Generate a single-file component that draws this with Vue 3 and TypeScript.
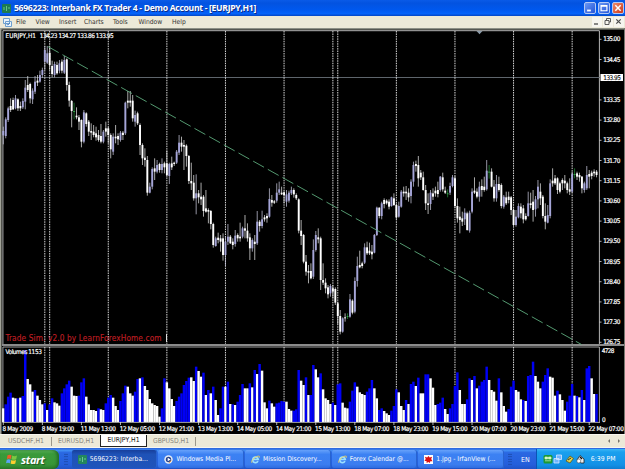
<template>
    <div class="desktop">
        <header class="titlebar">
            <svg class="app-icon" viewBox="0 0 9 9"><rect width="9" height="9" rx="1" fill="#1d7a50" /><path d="M2 6V3M4.5 7V2M7 5V3" stroke="#63c58b" /></svg>
            <span class="title">5696223: Interbank FX Trader 4 - Demo Account - [EURJPY,H1]</span>
            <div class="win-buttons">
                <i class="win"><svg viewBox="0 0 12 12"><path d="M2.5 9h4.5" stroke="#fff" stroke-width="2.2" /></svg></i>
                <i class="win"><svg viewBox="0 0 12 12"><path d="M2.5 3h7v6.3h-7zM2.5 3.8h7" fill="none" stroke="#fff" stroke-width="1.4" /></svg></i>
                <i class="win close"><svg viewBox="0 0 12 12"><path d="M2.8 2.8l6.4 6.4M9.2 2.8L2.8 9.2" stroke="#fff" stroke-width="1.8" /></svg></i>
            </div>
        </header>
        <nav class="menubar">
            <svg class="menu-icon" viewBox="0 0 9 9"><path d="M.5.5h6v5h-6zM2.5 3.5h6v5h-6z" fill="#e8f3fc" stroke="#6ea0cf" /><path d="M3.5 6l1.5 1 2-2" fill="none" stroke="#3d78b8" stroke-width=".8" /></svg>
            <span v-for="m in menus" :key="m.label" :class="['menu', m.key]">{{ m.label }}</span>
            <div class="mdi">
                <i><svg viewBox="0 0 9 9"><path d="M2 7h4" stroke="#4b4b4b" stroke-width="1.3" /></svg></i>
                <i><svg viewBox="0 0 9 9"><path d="M3.5 3V1.5h4V5H6M2 3.5h4v4H2z" fill="none" stroke="#4b4b4b" stroke-width=".9" /></svg></i>
                <i><svg viewBox="0 0 9 9"><path d="M2.3 2.3l4.4 4.4M6.7 2.3L2.3 6.7" stroke="#4b4b4b" stroke-width="1.2" /></svg></i>
            </div>
        </nav>

        <svg class="chart" viewBox="0 28 625 406" width="625" height="406">
            <rect x="0" y="28" width="625" height="406" fill="#000" />
            <rect x="0" y="28" width="625" height="1.6" fill="#8d9086" />
            <rect x="0" y="28" width="1.5" height="406" fill="#a2a398" />
            <rect x="624" y="28" width="1" height="406" fill="#77776f" />
            <!-- panes -->
            <path d="M2.9 344V30.7H599.4V344" fill="none" stroke="#c8c8c8" stroke-width=".9" />
            <rect x="2" y="344" width="622" height="2" fill="#8b8b8b" />
            <path d="M2.9 422.5V347H599.4V422.5" fill="none" stroke="#c8c8c8" stroke-width=".8" />
            <path d="M476.5 31h6l-3 3.2z" fill="#8c9ba8" />

            <line x1="3" x2="600" y1="77.5" y2="77.5" stroke="#697178" stroke-width=".9" />
            <g class="separators">
                <line v-for="i in sessions" :key="i" :x1="barX(i)" :x2="barX(i)" y1="31" y2="344" />
                <line v-for="i in sessions" :key="'v' + i" :x1="barX(i)" :x2="barX(i)" y1="347" y2="422" />
            </g>

            <g v-for="(c, i) in candles" :key="'c' + i">
                <line :x1="barX(i)" :x2="barX(i)" :y1="c.high" :y2="c.low" :stroke="wickColor(c.kind)" stroke-width=".75" />
                <rect v-if="c.kind !== 'g'" :x="barX(i) - 0.95" :y="c.top" width="1.9" :height="c.bottom - c.top" :fill="bodyColor(c.kind)" />
                <rect v-else :x="barX(i) - 1" :y="c.top" width="2" height=".9" fill="#36a84c" />
            </g>
            <line x1="47.8" y1="46.5" x2="581.5" y2="344.5" stroke="#62b383" stroke-width=".85" stroke-dasharray="12.4 4.4" />

            <rect v-for="(v, i) in volumes" :key="'b' + i" :x="barX(i) - 1.25" :y="v.y" width="2.45" :height="422 - v.y" :fill="v.up ? '#0000f5' : '#fff'" />
            <line x1="2.5" x2="600" y1="422.4" y2="422.4" stroke="#b5b5b5" stroke-width=".9" />

            <g class="axis">
                <text x="5.5" y="37.8" textLength="30.5">EURJPY,H1</text>
                <text x="39.7" y="37.8" textLength="74">134.23 134.27 133.86 133.95</text>
                <text x="5.5" y="354.3" textLength="36.3">Volumes 1153</text>
                <template v-for="p in priceLabels" :key="p.text">
                    <line x1="599.5" x2="601.5" :y1="p.y" :y2="p.y" stroke="#ddd" stroke-width=".8" />
                    <text x="603.3" :y="p.y + 2.1" textLength="17">{{ p.text }}</text>
                </template>
                <rect x="600.5" y="74" width="22.5" height="7" fill="#fff" />
                <text class="current" x="603.3" y="79.9" textLength="17.5">133.95</text>
                <text x="601.8" y="353" textLength="12.5">4728</text>
                <text x="602" y="421.7">0</text>
                <template v-for="(t, i) in timeLabels" :key="t">
                    <line :x1="3.3 + i * 39.06" :x2="3.3 + i * 39.06" y1="422" y2="425" stroke="#ddd" stroke-width=".8" />
                    <text :x="2.6 + i * 39.06" y="431.2" :textLength="labelWidth(t)">{{ t }}</text>
                </template>
            </g>
            <text class="sim" x="5.5" y="341" textLength="156">Trade Sim. v2.0 by LearnForexHome.com</text>
            <rect x="166" y="334" width="1" height="8" fill="#ddd" />
        </svg>

        <div class="tabs">
            <span v-for="(t, i) in tabs" :key="t" :class="['tab', 't' + i, { active: i === 2 }]">{{ t }}</span>
            <svg class="scroll" viewBox="0 0 14 6"><path d="M3 1v4L1 3zM11 1v4l2-2z" fill="#77746b" /></svg>
        </div>

        <footer class="taskbar">
            <div class="start">
                <svg viewBox="0 0 12 11"><path d="M1.5 1.3Q3.5.2 5.5 1.3L4.8 5Q3 4 .9 5z" fill="#f05a2b" /><path d="M6.2 1.6Q8.5 2.8 11 1.6L10.2 5.3Q8 6.3 5.5 5.3z" fill="#7cc842" /><path d="M.8 5.8Q2.8 4.7 4.6 5.8L4 9.3Q2 8.3 0 9.3z" fill="#5ba4f6" /><path d="M5.3 6Q7.5 7.2 10 6L9.3 9.6Q7 10.6 4.6 9.6z" fill="#fbcf30" /></svg>
                <span>start</span>
            </div>
            <i class="grip"></i>
            <div class="task pressed">
                <svg viewBox="0 0 9 9"><rect width="9" height="9" rx="1" fill="#23865c" /><path d="M2 6V3M4.5 7V2M7 5V3" stroke="#6ac992" /></svg>
                <span>5696223: Interba...</span>
            </div>
            <div class="task">
                <svg viewBox="0 0 9 9"><circle cx="4.5" cy="4.5" r="4.2" fill="#e9eef6" /><circle cx="4.5" cy="4.5" r="2.7" fill="#27428c" /><path d="M3.7 2.8v3.4l3-1.7z" fill="#fff" /><path d="M7 5.5a2.6 2.6 0 0 1-2 2" fill="none" stroke="#e8923a" /></svg>
                <span>Windows Media Pl...</span>
            </div>
            <div v-for="t in ['Mission Discovery...', 'Forex Calendar @...']" :key="t" class="task">
                <svg viewBox="0 0 9 9"><path d="M7 6.2A2.8 2.8 0 1 1 7.3 4.5H2.2" fill="none" stroke="#9be0ff" stroke-width="1.7" /><path d="M.9 7.8C-.8 5.5 6 .2 8.2 1.2c.6.4.3 1-.2 1.7" fill="none" stroke="#f2d25c" stroke-width=".9" /></svg>
                <span>{{ t }}</span>
            </div>
            <div class="task">
                <svg viewBox="0 0 10 10"><rect width="10" height="10" fill="#fff" /><path d="M1 2l2.5.8L5 1l1.3 1.8L9 2 8 4.5 9.5 7 7 7l-.5 2L5 7.7 2.8 9 3 7 .5 6.5 2 4.5z" fill="#dc1111" /></svg>
                <span>1.jpg - IrfanView (...</span>
            </div>
            <i class="grip right"></i>
            <span class="lang">EN</span>
            <div class="tray">
                <svg viewBox="0 0 42 11"><rect x=".5" y="1" width="9" height="8.5" rx="1.5" fill="#1d9a32" /><path d="M2 3h2.5v2H2zM5.5 3H8v2H5.5zM2 6.8h6" fill="#d6f5c6" stroke="#d6f5c6" stroke-width=".7" /><path d="M13.5 1h5v4.5h-5zM11 4.5h5V9h-5z" fill="#6fb5ff" stroke="#d7e9ff" stroke-width=".8" /><path d="M23 7l4-5 3.5 2.5L27 9z" fill="#e3d34b" stroke="#5e581b" stroke-width=".8" /><path d="M25 6l3-2" stroke="#333" /><path d="M34 6l3-4.5L41 5v4h-3z" fill="#eee" stroke="#222" stroke-width=".8" /><circle cx="35.8" cy="7" r="2" fill="#fff" stroke="#555" stroke-width=".6" /><path d="M37 3l2 2" stroke="#111" stroke-width="1.3" /></svg>
                <span>6:39 PM</span>
            </div>
        </footer>
    </div>
</template>

<script setup lang="ts">
type Kind = 'u' | 'w' | 'g'

interface Candle {
    high: number
    top: number
    bottom: number
    low: number
    kind: Kind
}

const menus = ['File', 'View', 'Insert', 'Charts', 'Tools', 'Window', 'Help'].map((label) => ({ label, key: label.toLowerCase() }))
const tabs = ['USDCHF,H1', 'EURUSD,H1', 'EURJPY,H1', 'GBPUSD,H1']
const timeLabels = [
    '8 May 2009', '8 May 19:00', '11 May 13:00', '12 May 05:00', '12 May 21:00', '13 May 13:00', '14 May 05:00', '14 May 21:00',
    '15 May 13:00', '18 May 07:00', '18 May 23:00', '19 May 15:00', '20 May 07:00', '20 May 23:00', '21 May 15:00', '22 May 07:00',
]
// bar indexes where a new trading day begins
const sessions = [17, 19, 43, 67, 91, 115, 135, 137, 161, 185, 209, 233]

const barX = (i: number) => 3.3 + i * 2.4414
const labelWidth = (t: string) => (t.length === 10 ? 30.5 : t.length === 11 ? 32.5 : 35.3)
const bodyColor = (k: Kind) => (k === 'u' ? '#a5a5d8' : '#fff')
const wickColor = (k: Kind) => (k === 'g' ? '#238c35' : k === 'u' ? '#c4c4d8' : '#e2e2e2')

const priceLabels = Array.from({ length: 16 }, (_, i) => ({ text: (135 - i * 0.55).toFixed(2), y: 39.3 + i * 20.2 })).filter((p) => p.text !== '133.90')

// high, body top, body bottom, low and kind per bar; values are thirds of a pixel below the block's first number
const blocks: [number, string][] = [
    [30, `290 303 316 343 u,262 268 318 325 u,230 235 270 276 u,205 228 240 246 w,203 210 238 240 w,195 205 235 238 u,205 208 235 243 w,
    215 228 235 243 w,205 213 232 237 u,150 173 215 238 u,138 165 180 186 w,158 162 205 220 w,175 182 208 222 u,138 155 185 192 u,
    135 152 158 168 w,122 135 155 158 u,113 120 135 144 u,48 60 95 120 u,48 70 98 102 u,52 68 105 120 w,92 108 132 142 w,95 102 135 142 u,
    95 105 130 134 w,90 100 122 130 u,88 95 122 130 w,78 90 128 132 u,85 88 165 182 w,155 165 212 230 w,210 213 243 292 w,218 243 243 268 g,
    232 257 262 268 w,255 262 275 300 w,268 270 335 352 w,240 247 335 340 u,247 250 282 290 w,270 275 305 318 w,280 303 308 330 w,
    285 305 315 322 w,290 310 322 332 w,300 315 330 335 w,282 318 335 340 w,300 305 335 340 u,275 295 305 320 w,290 295 315 340 w,
    310 315 358 385 w,310 320 365 375 u,285 320 325 340 w,310 318 328 345 w,303 308 330 335 u,303 308 315 330 w,215 218 310 315 u,
    183 212 218 235 w,183 212 218 230 w,195 212 265 275 w,242 255 275 290 u,245 250 280 285 w,280 285 345 375 w,340 345 385 405 w,355 383 390 410 w`],
    [80, `228 240 338 347 w,308 320 338 340 u,262 267 320 328 u,235 265 275 300 w,240 255 275 280 u,248 252 270 278 w,235 252 270 280 u,
    245 250 262 280 w,212 250 285 290 w,248 252 288 312 u,230 250 262 270 w,245 248 252 258 w,210 215 248 252 u,165 188 218 225 u,
    170 188 200 215 w,180 195 200 270 w,193 197 228 260 w,225 228 303 312 w,248 303 310 330 w,285 308 355 362 w,283 340 355 403 u,
    330 340 352 370 w,308 350 358 375 w,345 350 393 410 w,330 385 395 398 w,385 390 395 430 w,390 393 432 448 w,428 432 495 503 w,
    470 475 498 500 u,458 473 480 490 w,465 475 485 515 w,460 475 525 542 w,468 485 525 558 u,432 470 485 495 u,465 470 490 492 w,
    475 485 495 508 w,450 467 492 500 u,460 465 475 485 w,428 470 475 485 w,440 445 470 475 u,405 445 452 475 w,430 452 475 485 w,
    460 472 505 540 w,475 480 505 515 u,465 485 492 540 w,393 425 490 495 u,420 425 438 455 w,392 418 438 445 u,405 412 418 425 w,400 408 415 428 w`],
    [160, `85 117 170 173 u,105 120 128 140 w,120 124 128 132 w,70 98 122 128 u,65 88 98 105 u,80 98 103 105 w,92 97 105 130 w,
    90 103 125 140 u,92 98 122 128 u,80 90 100 105 u,85 90 103 113 w,100 105 115 120 w,115 118 212 220 w,180 212 228 255 w,
    222 225 305 310 w,285 305 335 347 w,315 333 338 370 w,310 333 355 358 w,238 270 350 357 u,213 225 270 275 u,205 232 238 250 w,
    230 235 360 390 w,310 360 368 375 w,355 368 385 400 w,375 382 403 415 w,372 378 400 410 u,375 385 395 415 w,382 387 428 435 w,
    425 430 468 493 w,450 468 515 523 w,472 475 515 518 u,460 472 475 485 w,460 468 468 477 g,402 418 470 473 u,418 422 458 463 w,
    352 363 455 460 u,290 318 363 380 u,272 315 322 325 w,305 310 318 325 w,250 262 308 312 u,245 262 280 285 w,248 272 280 285 w,
    255 275 283 298 w,222 225 278 280 u`],
    [140, `200 203 285 288 u,202 203 228 235 w,185 190 228 238 u,175 180 192 205 w,178 182 190 194 w,178 185 200 208 w,170 172 198 200 u,
    160 175 195 198 w,190 195 232 238 w,185 198 230 233 u,150 155 200 203 u,140 155 160 170 w,138 155 160 180 w,145 158 172 185 w,
    118 125 168 190 u,65 75 125 140 u,62 72 78 95 w,48 75 115 140 w,90 98 112 120 w,95 112 150 152 w,135 150 190 210 w,
    160 190 195 222 w,150 158 192 210 u,145 160 170 180 w,140 152 160 170 w,125 150 162 172 w,108 110 150 155 u,98 112 148 155 w,
    140 152 158 162 w,148 160 160 172 g,128 138 158 165 u,105 112 138 142 u,108 115 198 205 w,175 198 235 248 w,200 230 240 280 w,
    215 235 245 258 w,205 218 238 255 u,215 220 270 272 w,212 218 272 278 u,145 155 215 220 u,112 152 158 162 w,145 155 170 175 w,
    125 140 170 185 u,118 138 150 170 w,110 140 150 155 w,60 92 148 152 u,75 95 95 116 g,85 95 140 142 w,120 140 175 185 w,
    105 132 175 185 u,110 132 150 155 w,130 135 198 205 w,165 170 200 206 u,155 172 190 195 w,155 170 180 190 w,168 172 210 225 w,
    205 210 255 258 w,210 230 255 260 u,190 198 232 235 u,190 200 220 235 w,195 205 238 250 w,220 228 238 242 w,155 190 228 230 u,
    158 190 195 205 w,150 185 210 245 w,168 178 208 230 u,120 140 178 205 u,130 155 175 195 w,165 170 228 235 w,190 228 245 268 w,
    195 225 248 250 u,118 130 228 235 u,85 122 130 140 w,105 115 130 135 w,112 115 150 162 w,125 130 155 160 w,115 120 130 150 w,
    105 122 130 145 w,125 130 150 160 w,115 148 155 165 w,95 102 155 158 u,85 102 102 115 g,95 100 110 120 w,98 105 112 125 w,
    108 110 145 160 w,125 130 150 158 u,78 105 145 150 u,90 102 110 145 w,92 98 108 118 w,88 95 100 110 w,90 95 105 112 w`],
]

const candles: Candle[] = blocks.flatMap(([base, rows]) =>
    rows.split(',').map((row) => {
        const [h, t, b, l, kind] = row.trim().split(' ')
        const y = (s: string) => base + Number(s) / 3
        return { high: y(h), top: y(t), bottom: y(b), low: y(l), kind: kind as Kind }
    })
)

// same units as above, b = rising volume (blue), w = falling volume (white)
const volumeBlocks: [number, string][] = [
    [325, `w250 b238 b215 b203 w218 w220 b220 w218 b213 b75 w162 w178 w200 b195 w212 w225 w238 b235 w255 b238 b220 w232 w235 w242
    b205 b190 b178 b167 w185 w212 w213 b212 b172 b160 w215 w238 w255 w255 w258 b250 w253 w255 b235 b218 b210 w218 w243 w255
    b228 b205 b182 w185 w205 w212 b200 b162 w160 b157 w183 w195 w222 w235 w240 w243 w275 b250 b160 w172 w190 w222 w243
    b228 b215 b205 b180 b168 b158 w157 w168 b125 w138 w155`],
    [340, `b98 w165 b150 w160 b140 w180 w225 b205 b140 w140 b125 w192 b193 w195 b185 b165 b132 w145 w145 b130 w142 b90 w102 b72
    w92 w187 w205 b182 w190 w200 b190 b188 b183 b185 w185 w207 w212 b212 b208 b90 w122 w135 b112 w165 b165 b75 w88 w112
    b100 w148 w175 w180 w192 b188 w195 b133 b130 w188 w203 w205 b185 b152 b127 w140 w157 w162 w165 b155 b145 b120 w145 w175
    b210 b205 w213 w220 w225 b212 b198 b148 w157 w198 w210 b180 w192 b132 b125 w138 b113 w160 w160 b103 b103 w115 w143 w195
    b192 b188 b173 w207 w222 b205 b192 b138 b97 w150 w192 w192 b178 b115 w120 b108 w145 b137 b125 b120 b80 w120 w150 w155
    w182 b115 w157 w198 w215 b207 b140 b122 w150 w155 w178 b180 w183 b108 b105 b65 w108 w125 w145 b125 b105 b85 w110 w113
    w167 b152 w163 w180 w212 b185 b167 b132 w167 b168 w172 b150 w180 b85 b78 w115 w162 b162`],
]

const volumes = volumeBlocks.flatMap(([base, row]) =>
    row.trim().split(/\s+/).map((s) => ({ up: s[0] === 'b', y: base + Number(s.slice(1)) / 3 }))
)
</script>

<style scoped>
.desktop {
    width: 625px;
    height: 469px;
    display: flex;
    flex-direction: column;
    overflow: hidden;
    background: #000;
    font-family: "DejaVu Sans Condensed", "DejaVu Sans", sans-serif;
    font-stretch: condensed;
    font-size: 7px;
    white-space: nowrap;
}

.titlebar {
    height: 16px;
    flex: none;
    display: flex;
    align-items: center;
    padding: 0 1px 0 2px;
    background: linear-gradient(#0a5be8, #0353e0 20%, #0058ee 60%, #0463fa 85%, #0446c4);
}

.app-icon {
    width: 9px;
    height: 9px;
}

.title {
    margin-left: 3px;
    color: #fff;
    font: bold 8.6px "Open Sans", sans-serif;
    letter-spacing: -0.3px;
    text-shadow: 1px 1px 0 #0b2c86;
}

.win-buttons {
    margin-left: auto;
    display: flex;
    gap: 2px;
}

.win {
    width: 12px;
    height: 12px;
    box-sizing: border-box;
    border: 1px solid #b4c8f4;
    border-radius: 2px;
    background: linear-gradient(135deg, #6a98f4, #2354d8);
    display: flex;
}

.win svg {
    width: 10px;
    height: 10px;
}

.win.close {
    background: linear-gradient(135deg, #ee8c6c, #cc3718);
}

.menubar {
    height: 12px;
    flex: none;
    display: flex;
    align-items: center;
    background: #ece9d8;
    color: #333;
    font-size: 6.7px;
}

.menu-icon {
    width: 9px;
    height: 9px;
    margin: 0 4px 0 3px;
}

.menu.file {
    width: 19.5px;
}

.menu.view {
    width: 23.5px;
}

.menu.insert {
    width: 25px;
}

.menu.charts {
    width: 29px;
}

.menu.tools {
    width: 25.5px;
}

.menu.window {
    width: 33.5px;
}

.mdi {
    margin-left: auto;
    display: flex;
    gap: 1px;
    padding-right: 1px;
}

.mdi i {
    width: 10px;
    height: 10px;
    background: #f6f5ef;
}

.mdi svg {
    display: block;
    width: 9px;
    height: 9px;
}

.chart {
    flex: none;
    display: block;
}

.separators line {
    stroke: #f0f0f0;
    stroke-width: 0.9;
    stroke-dasharray: 1.5 0.94;
}

.axis text {
    fill: #fff;
    stroke: #fff;
    stroke-width: 0.18px;
    font-size: 6.4px;
}

.axis text.current {
    fill: #000;
    stroke: #000;
    stroke-width: 0.1px;
}

.sim {
    fill: #c01f24;
    stroke: #c01f24;
    stroke-width: 0.12px;
    font-size: 8.2px;
}

.tabs {
    height: 14px;
    flex: none;
    display: flex;
    align-items: center;
    box-sizing: border-box;
    padding-left: 1px;
    border-top: 1px solid #f7f6ef;
    border-bottom: 1px solid #f7f6ef;
    background: #ece9d8;
    color: #88867d;
    font-size: 6.8px;
}

.tab {
    box-sizing: border-box;
    height: 9px;
    line-height: 9px;
    text-align: center;
    border-right: 1px solid #9b988b;
}

.tab.t0 {
    width: 51px;
}

.tab.t1 {
    width: 48px;
    border-right: 0;
}

.tab.active {
    width: 47px;
    height: 12px;
    line-height: 10px;
    background: #fff;
    color: #111;
    border: 1px solid #222;
    border-top: 0;
}

.tab.t3 {
    width: 49px;
}

.scroll {
    margin: 0 4px 0 auto;
    width: 14px;
    height: 6px;
}

.taskbar {
    flex: 1;
    display: flex;
    align-items: stretch;
    box-sizing: border-box;
    padding-top: 2px;
    background: linear-gradient(#2a62dc, #3f8cf2 12%, #2a68e2 22%, #245edb 80%, #2053c6);
    color: #fff;
}

.start {
    width: 59px;
    box-sizing: border-box;
    padding-left: 6px;
    display: flex;
    align-items: center;
    gap: 3px;
    border-radius: 0 6px 6px 0;
    background: linear-gradient(#5fb45c, #3a9a3a 20%, #379637 75%, #2b7d2b);
    box-shadow: inset -2px 0 3px #236b28;
}

.start svg {
    width: 12px;
    height: 11px;
}

.start span {
    font: italic bold 11px "Open Sans", sans-serif;
    letter-spacing: -0.4px;
    text-shadow: 1px 1px 1px #1d5520;
    margin-top: -1px;
}

.grip {
    width: 4px;
    margin: 3px 3px 3px 5px;
    background: radial-gradient(circle, #1b48a8 0.7px, transparent 0.9px) 0 0 / 2px 2.5px;
}

.task {
    width: 86px;
    margin: 0 0 1px 1px;
    box-sizing: border-box;
    padding-left: 6px;
    display: flex;
    align-items: center;
    gap: 3px;
    border-radius: 2px;
    background: linear-gradient(#66a1fa, #3c81f3 25%, #3b7df0 80%, #2f6ce0);
    box-shadow: inset -1px 0 0 #2863cf;
    font-size: 6.7px;
}

.task.pressed {
    background: linear-gradient(#173f9c, #1e52b7 25%, #2054bb);
}

.task svg {
    width: 9px;
    height: 9px;
    flex: none;
}

.grip.right {
    margin: 3px 3px 3px 4px;
}

.lang {
    width: 21px;
    display: flex;
    align-items: center;
    justify-content: center;
    margin-right: auto;
}

.tray {
    width: 89.5px;
    margin-top: -1px;
    box-sizing: border-box;
    padding-left: 6px;
    display: flex;
    align-items: center;
    gap: 6px;
    border-left: 1px solid #0b54b5;
    background: linear-gradient(#3cb6f5, #1aa0ee 15%, #1290e6 80%, #0f7cd0);
    font-size: 6.8px;
}

.tray svg {
    width: 42px;
    height: 11px;
}
</style>

<style>
body {
    margin: 0;
    overflow: hidden;
}
</style>
